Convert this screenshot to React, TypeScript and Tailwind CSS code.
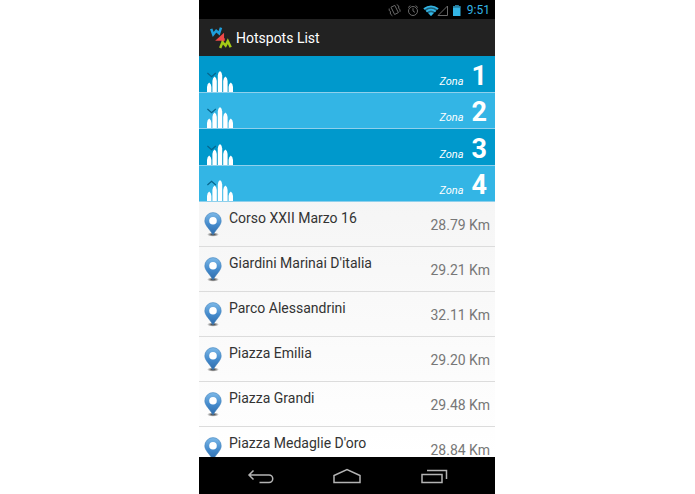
import { useState } from 'react';
import clsx from 'clsx';

const ZONES = [1, 2, 3, 4];

const HOTSPOTS = [
  { name: 'Corso XXII Marzo 16', distance: '28.79 Km' },
  { name: "Giardini Marinai D'italia", distance: '29.21 Km' },
  { name: 'Parco Alessandrini', distance: '32.11 Km' },
  { name: 'Piazza Emilia', distance: '29.20 Km' },
  { name: 'Piazza Grandi', distance: '29.48 Km' },
  { name: "Piazza Medaglie D'oro", distance: '28.84 Km' },
];

function StatusBar() {
  return (
    <div className="flex h-[19px] shrink-0 items-center justify-end gap-1 bg-black pt-px pr-[5px] text-[#33b5e5]">
      {/* vibrate, alarm, wifi, signal, battery */}
      <svg width="76" height="15" viewBox="0 0 76 15" fill="none" aria-hidden="true">
        <g stroke="#6a6a6a">
          <path d="m4 4.200 3.800-1.800 3.600 7.200-3.800 1.900z" />
          <path d="M2.200 5.500v2l1.200.8V11l2 1.800M9.700 1.500l2 1.500v2.500l1.300 1v2.300" />
          <circle cx="26" cy="8" r="4.500" />
          <path d="M26 5.200V8l2 1.400M21.100 4.600l2.300-2.100M30.900 4.600l-2.300-2.100" />
          <path d="M51 12.500h9.500V3z" />
        </g>
        <path d="M44 13 36.700 5.600q7.300-5.400 14.600 0z" fill="#1b607a" />
        <path d="M36.900 5.900q7.100-5.200 14.200 0M39.300 8.400q4.700-3.400 9.400 0" stroke="#33b5e5" strokeWidth="1.8" />
        <path d="m44 13-2.600-2.800q2.600-1.800 5.200 0z" fill="#33b5e5" />
        <path d="M66 3.200h2V2h3.500v1.200h2V13H66z" fill="#33b5e5" />
        <path d="M66 3.200h2V2h3.500v1.200h2v1.600H66z" fill="#277e9f" />
      </svg>
      <time className="text-[12px] leading-[18px]">9:51</time>
    </div>
  );
}

function AppLogo() {
  return (
    <svg width="22" height="22" viewBox="0 0 22 22" fill="none" strokeWidth="2.5" aria-hidden="true">
      <path d="M1.200 1.800 3.200 7.500l3-3.800 2.900 2.600L11 .6" stroke="#1e9fdc" />
      <path d="M12.800 14.800V8.600l-4.400 4h6.400" stroke="#f04848" />
      <path d="m10.200 21 2.300-5.800 3.100 3.400 2.200-4.400 2.900 6" stroke="#a4c916" />
    </svg>
  );
}

function ZoneIcon({ expanded }: { expanded: boolean }) {
  return (
    <svg width="26" height="22" viewBox="0 0 26 22" aria-hidden="true">
      <path
        d={expanded ? 'm.4 6 4.200-3.800L8.800 6' : 'm.4 3 4.200 3.600L8.800 3'}
        fill="none"
        stroke="#07658c"
        strokeWidth="1.200"
      />
      <g fill="#fff">
        <path d="M0 22v-5q.2-3.400 2.200-4.500 2 1.100 2.200 4.500v5z" />
        <path d="M5.400 22V11q.2-3.400 2.200-4.500 2 1.100 2.200 4.500v11z" />
        <path d="M10.800 22V5.500Q11 2.100 13 1q2 1.100 2.200 4.500V22z" />
        <path d="M16.200 22V11q.2-3.400 2.200-4.500 2 1.100 2.200 4.500v11z" />
        <path d="M21.600 22v-5q.2-3.400 2.200-4.500 2 1.100 2.200 4.500v5z" />
      </g>
    </svg>
  );
}

function PinIcon() {
  return (
    <svg width="18" height="25" viewBox="0 0 18 25" aria-hidden="true">
      <defs>
        <linearGradient id="pin" x1="0" y1="0" x2="0" y2="1">
          <stop offset="0" stopColor="#7db9e8" />
          <stop offset=".55" stopColor="#4389cb" />
          <stop offset="1" stopColor="#2e6baa" />
        </linearGradient>
        <radialGradient id="shadow">
          <stop offset="0" stopColor="#222" />
          <stop offset="1" stopColor="#222" stopOpacity="0" />
        </radialGradient>
      </defs>
      <ellipse cx="9" cy="22.5" rx="6" ry="2.2" fill="url(#shadow)" />
      <path
        d="M9 .6a8.200 8.200 0 0 1 8.200 8.300c0 4.600-5 8-8.200 14.100C5.800 16.900.8 13.500.8 8.900A8.200 8.200 0 0 1 9 .6z"
        fill="url(#pin)"
        stroke="#4a86be"
        strokeWidth=".6"
      />
      <circle cx="9" cy="8.8" r="3.8" fill="#fff" />
    </svg>
  );
}

interface ZoneRowProps {
  zone: number;
  expanded: boolean;
  onSelect: () => void;
}

function ZoneRow({ zone, expanded, onSelect }: ZoneRowProps) {
  return (
    <button
      type="button"
      onClick={onSelect}
      aria-expanded={expanded}
      className={clsx(
        'flex w-full items-end justify-between border-b border-[#8fd0ec] px-2 text-white',
        zone % 2 ? 'h-[37px] bg-[#0099cc]' : 'h-9 bg-[#33b5e5]',
      )}
    >
      <ZoneIcon expanded={expanded} />
      <span className="flex items-baseline gap-2">
        <span className="text-[11px] italic">Zona</span>
        <span className="text-[27px] leading-[31px] font-bold">{zone}</span>
      </span>
    </button>
  );
}

function NavBar() {
  return (
    <nav className="flex h-[37px] shrink-0 items-center justify-center gap-[58px] bg-black pt-[3px] text-[#b4b4b4]">
      <button type="button" aria-label="Back">
        <svg width="28" height="18" viewBox="0 0 28 18" fill="none" stroke="currentColor" strokeWidth="1.5">
          <path d="M7.500 2.500 3 7l4.500 4.500M3.500 7H23a3.700 3.700 0 0 1 0 7.500h-9.500" />
        </svg>
      </button>
      <button type="button" aria-label="Home">
        <svg width="30" height="18" viewBox="0 0 30 18" fill="none" stroke="currentColor" strokeWidth="1.5">
          <path d="M2 14.500v-7L15 1.500l13 6v7z" />
        </svg>
      </button>
      <button type="button" aria-label="Recent apps">
        <svg width="28" height="18" viewBox="0 0 28 18" fill="none" stroke="currentColor" strokeWidth="1.5">
          <path d="M2 6.500h20v8H2zM7 2.500h19.500V11" />
        </svg>
      </button>
    </nav>
  );
}

export default function App() {
  const [openZone, setOpenZone] = useState(4);

  return (
    <div className="flex h-screen justify-center bg-white pr-px font-['Roboto','Liberation_Sans',sans-serif]">
      <div className="flex w-full max-w-[296px] flex-col overflow-hidden bg-black">
        <StatusBar />
        <header className="flex h-[37px] shrink-0 items-center gap-1 bg-[#222] pt-px pl-[11px] text-white">
          <AppLogo />
          <h1 className="text-[14px]">Hotspots List</h1>
        </header>

        <main className="min-h-0 flex-1 overflow-hidden bg-linear-to-b from-[#f0f0f0] to-white">
          {ZONES.map((zone) => (
            <ZoneRow
              key={zone}
              zone={zone}
              expanded={zone === openZone}
              onSelect={() => setOpenZone(zone)}
            />
          ))}
          <ul>
            {HOTSPOTS.map(({ name, distance }) => (
              <li
                key={name}
                className="flex h-[45px] items-center border-b border-[#dcdcdc] px-[5px]"
              >
                <PinIcon />
                <span className="ml-[7px] self-start pt-[6px] text-[14px] leading-5 text-[#333]">{name}</span>
                <span className="ml-auto pt-[2px] text-[14px] leading-5 text-[#777]">{distance}</span>
              </li>
            ))}
          </ul>
        </main>

        <NavBar />
      </div>
    </div>
  );
}
